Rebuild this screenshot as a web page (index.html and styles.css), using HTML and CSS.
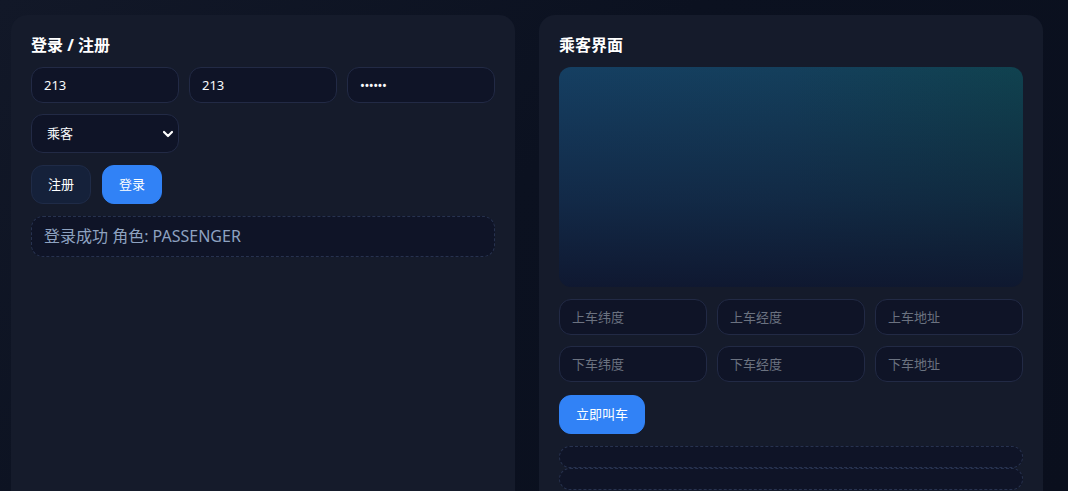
FILE: index.html
```html
<!DOCTYPE html>
<html lang="zh-CN">
<head>
    <meta charset="UTF-8">
    <meta name="viewport" content="width=device-width, initial-scale=1.0">
    <title>打车平台</title>
    <link rel="stylesheet" href="styles.css">
</head>
<body>
    <div class="app">
        <section class="card">
            <h3>登录 / 注册</h3>
            <div class="row3">
                <input type="text" value="213" placeholder="用户名">
                <input type="text" value="213" placeholder="手机号">
                <input type="password" value="123456" placeholder="密码">
            </div>
            <div class="row3 gap-top">
                <select class="role">
                    <option>乘客</option>
                    <option>司机</option>
                </select>
            </div>
            <div class="actions">
                <button class="btn">注册</button>
                <button class="btn primary">登录</button>
            </div>
            <div class="status">登录成功 角色: PASSENGER</div>
        </section>

        <section class="card">
            <h3>乘客界面</h3>
            <div class="map"></div>
            <div class="row3 after-map">
                <input type="text" placeholder="上车纬度">
                <input type="text" placeholder="上车经度">
                <input type="text" placeholder="上车地址">
            </div>
            <div class="row3 gap-top">
                <input type="text" placeholder="下车纬度">
                <input type="text" placeholder="下车经度">
                <input type="text" placeholder="下车地址">
            </div>
            <div class="actions call">
                <button class="btn primary">立即叫车</button>
            </div>
            <div class="status"></div>
            <div class="status stacked"></div>
        </section>
    </div>
</body>
</html>
```

FILE: styles.css
```css
body {
    margin: 0;
    height: 491px;
    overflow: hidden;
    font-family: "Segoe UI", "Noto Sans", "Noto Sans CJK SC", sans-serif;
    color: #f1f5f9;
    background: linear-gradient(135deg, #121828 0%, #0b1120 45%, #0a0f1d 100%);
}
.app {
    display: grid;
    grid-template-columns: 504px 504px;
    gap: 24px;
    padding: 15px 0 0 11px;
}
.card {
    background: #151b2b;
    border-radius: 16px 16px 0 0;
    padding: 20px 20px 0;
    height: 476px;
    box-sizing: border-box;
}
h3 {
    margin: 0 0 12px;
    font-size: 16px;
    line-height: 20px;
    font-weight: bold;
    color: #ffffff;
}
.row3 {
    display: grid;
    grid-template-columns: repeat(3, 1fr);
    gap: 10px;
}
.gap-top {
    margin-top: 11px;
}
.after-map {
    margin-top: 12px;
}
input, select {
    width: 100%;
    box-sizing: border-box;
    font-family: inherit;
    font-size: 13px;
    line-height: 16px;
    padding: 9px 12px;
    color: #f8fafc;
    background: #0f1427;
    border: 1px solid #222a45;
    border-radius: 12px;
    outline: none;
}
input::placeholder {
    color: #6b7280;
}
input[type="password"] {
    letter-spacing: -0.5px;
}
.role {
    appearance: none;
    -webkit-appearance: none;
    padding: 10px 15px;
    line-height: 17px;
    background: #0f1427 url("data:image/svg+xml;utf8,<svg xmlns='http://www.w3.org/2000/svg' width='12' height='8' viewBox='0 0 12 8'><path d='M2 2l4 4 4-4' fill='none' stroke='white' stroke-width='2.2' stroke-linecap='round' stroke-linejoin='round'/></svg>") no-repeat right 4px center;
}
.actions {
    display: flex;
    gap: 11px;
    margin-top: 12px;
}
.call {
    margin-top: 13px;
}
.btn {
    font-family: inherit;
    font-size: 13px;
    line-height: 17px;
    padding: 10px 16px;
    color: #ffffff;
    background: #15213a;
    border: 1px solid #1f2b47;
    border-radius: 12px;
    cursor: pointer;
}
.btn.primary {
    background: #3182f6;
    border-color: #3182f6;
}
.status {
    margin-top: 12px;
    padding: 10px 12px;
    font-size: 16px;
    line-height: 19px;
    color: #8ea2c0;
    background: #0f1427;
    border: 1px dashed #27324f;
    border-radius: 12px;
}
.status:empty {
    line-height: 0;
}
.stacked {
    margin-top: 0;
}
.map {
    height: 220px;
    border-radius: 12px;
    background:
        linear-gradient(180deg, rgba(16, 24, 50, 0) 0%, rgba(16, 24, 50, 0.55) 60%, rgba(15, 22, 46, 0.95) 100%),
        linear-gradient(90deg, #153f62 0%, #143f5c 50%, #10424f 100%);
}
```
